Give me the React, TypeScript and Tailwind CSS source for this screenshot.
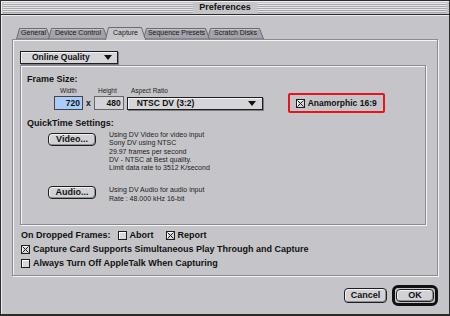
import React from "react";

const ui = "font-['Liberation_Sans',Arial,sans-serif]";

const tabs = [
  { label: "General", w: 35, z: "z-[1]" },
  { label: "Device Control", w: 60, z: "z-[2]" },
  { label: "Capture", w: 41, z: "z-[6]", active: true },
  { label: "Sequence Presets", w: 67, z: "z-[4]" },
  { label: "Scratch Disks", w: 57, z: "z-[3]" },
];

function Tab({ label, w, z, active }: { label: string; w: number; z: string; active?: boolean }) {
  const h = active ? 13 : 11;
  return (
    <div
      className={`relative ${z} flex items-center justify-center -ml-[3px] first:ml-0 text-[7px] text-[#1a1a1a] ${active ? "h-[13px] -mb-[1px]" : "h-[11px]"}`}
      style={{ width: w }}
    >
      <svg className="absolute inset-0" width={w} height={h}>
        <polygon
          points={`0.5,${h} 3.5,0.5 ${w - 4.5},0.5 ${w - 0.5},${h}`}
          fill={active ? "#c5c5c9" : "#a3a3ab"}
          stroke="#6b6b72"
          strokeWidth="1"
        />
        {active && <line x1="1" y1={h - 0.5} x2={w - 1} y2={h - 0.5} stroke="#c5c5c9" strokeWidth="2" />}
        {!active && <line x1="4" y1="1.5" x2={w - 5} y2="1.5" stroke="#c4c4ca" strokeWidth="1" />}
      </svg>
      <span className="relative pb-[1px]">{label}</span>
    </div>
  );
}

function Check({ on }: { on?: boolean }) {
  return (
    <span className="flex h-[9px] w-[9px] shrink-0 items-center justify-center border border-[#1e1e1e] bg-[#d8d8dc] shadow-[inset_1px_1px_0_#ffffff]">
      {on && (
        <svg width="7" height="7" viewBox="0 0 7 7">
          <path d="M0.5 0.5 L6.5 6.5 M6.5 0.5 L0.5 6.5" stroke="#1e1e1e" strokeWidth="1" />
        </svg>
      )}
    </span>
  );
}

function Arrow() {
  return (
    <svg width="8" height="5" viewBox="0 0 8 5">
      <path d="M0 0 H8 L4 5 Z" fill="#111" />
    </svg>
  );
}

function PushButton({ children, className = "" }: { children: React.ReactNode; className?: string }) {
  return (
    <div
      className={`flex items-center justify-center rounded-[4px] border border-[#1e1e1e] bg-[#d2d2d6] text-[9px] font-bold text-[#111] shadow-[inset_1px_1px_0_#f2f2f4,inset_-1px_-1px_0_#8e8e94] ${className}`}
    >
      {children}
    </div>
  );
}

export default function App() {
  return (
    <div className={`${ui} flex h-[316px] w-[450px] flex-col border border-[#2c2c2c] border-b-2 bg-[#c5c5c9] text-[#111]`}>
      {/* title bar */}
      <div className="flex h-[14px] shrink-0 items-center border-b border-[#2c2c2c] px-[2px] shadow-[inset_1px_1px_0_#eeeef0]">
        <div className="h-[10px] flex-1 bg-[repeating-linear-gradient(to_bottom,#e6e6ea_0px,#e6e6ea_1px,#a8a8ae_1px,#a8a8ae_2px)]" />
        <span className="px-[6px] text-[9px] font-bold leading-none">Preferences</span>
        <div className="h-[10px] flex-1 bg-[repeating-linear-gradient(to_bottom,#e6e6ea_0px,#e6e6ea_1px,#a8a8ae_1px,#a8a8ae_2px)]" />
      </div>

      <div className="flex flex-1 flex-col px-[11px] pt-[12px] shadow-[inset_1px_1px_0_#eeeef0]">
        {/* tabs */}
        <div className="flex h-[12px] items-end pl-[4px]">
          {tabs.map((t) => (
            <Tab key={t.label} {...t} />
          ))}
        </div>

        {/* tab panel */}
        <div className="flex h-[237px] flex-col border border-[#8a8a90] px-[7px] pt-[11px] shadow-[inset_1px_1px_0_#f4f4f6,1px_1px_0_#f4f4f6]">
          {/* popup */}
          <div className="flex h-[13px] w-[98px] items-center justify-between border border-[#1e1e1e] bg-[#d6d6da] pl-[11px] pr-[5px] text-[8.5px] font-bold shadow-[1px_1px_0_#7e7e84,inset_1px_1px_0_#f4f4f6]">
            <span>Online Quality</span>
            <Arrow />
          </div>

          {/* group box */}
          <div className="mt-[1px] flex h-[160px] w-[406px] flex-col border border-[#8a8a90] px-[6px] pt-[8px] shadow-[inset_1px_1px_0_#f4f4f6,1px_1px_0_#f4f4f6]">
            <div className="text-[9px] font-bold leading-[10px]">Frame Size:</div>

            <div className="mt-[3px] flex text-[6.5px] leading-[8px] text-[#222]">
              <span className="ml-[33px] w-[38px]">Width</span>
              <span className="w-[33px]">Height</span>
              <span>Aspect Ratio</span>
            </div>

            <div className="mt-[1px] flex h-[14px] items-center">
              <div className="ml-[27px] flex h-[14px] w-[29px] items-center justify-end border border-[#444] bg-[#a8cdfa] pr-[2px] text-[8.5px] font-bold">
                720
              </div>
              <span className="mx-[3px] text-[8.5px] font-bold">x</span>
              <div className="flex h-[14px] w-[30px] items-center justify-end border border-[#666] bg-[#d4d4d8] pr-[2px] text-[8.5px] font-bold">
                480
              </div>
              <div className="ml-[3px] flex h-[13px] w-[136px] items-center justify-between border border-[#1e1e1e] bg-[#d6d6da] pl-[9px] pr-[6px] text-[8.5px] font-bold shadow-[1px_1px_0_#7e7e84,inset_1px_1px_0_#f4f4f6]">
                <span>NTSC DV (3:2)</span>
                <Arrow />
              </div>
              <div className="-my-[3px] ml-[25px] flex h-[20px] w-[97px] items-center gap-[3px] rounded-[2px] border-2 border-[#e8141c] pl-[6px]">
                <Check on />
                <span className="text-[8.5px] font-bold">Anamorphic 16:9</span>
              </div>
            </div>

            <div className="mt-[8px] text-[9px] font-bold leading-[10px]">QuickTime Settings:</div>

            <div className="mt-[3px] flex">
              <PushButton className="ml-[21px] mt-[2px] h-[13px] w-[48px]">Video...</PushButton>
              <div className="ml-[13px] text-[7px] leading-[8.3px] text-[#222]">
                <div>Using DV Video for video input</div>
                <div>Sony DV using NTSC</div>
                <div>29.97 frames per second</div>
                <div>DV - NTSC at Best quality.</div>
                <div>Limit data rate to 3512 K/second</div>
              </div>
            </div>

            <div className="mt-[14px] flex">
              <PushButton className="ml-[21px] h-[13px] w-[48px]">Audio...</PushButton>
              <div className="ml-[13px] text-[7px] leading-[8.3px] text-[#222]">
                <div>Using DV Audio for audio input</div>
                <div>Rate : 48.000 kHz 16-bit</div>
              </div>
            </div>
          </div>

          {/* options */}
          <div className="mt-[5px] flex flex-col gap-[4px] pl-[1px] text-[9px] font-bold leading-[10px]">
            <div className="flex items-center">
              <span>On Dropped Frames:</span>
              <span className="ml-[7px]"><Check /></span>
              <span className="ml-[3px]">Abort</span>
              <span className="ml-[12px]"><Check on /></span>
              <span className="ml-[3px]">Report</span>
            </div>
            <div className="flex items-center gap-[3px]">
              <Check on />
              <span>Capture Card Supports Simultaneous Play Through and Capture</span>
            </div>
            <div className="flex items-center gap-[3px]">
              <Check />
              <span>Always Turn Off AppleTalk When Capturing</span>
            </div>
          </div>
        </div>

        {/* buttons */}
        <div className="mt-[9px] flex items-center justify-end gap-[5px]">
          <PushButton className="h-[15px] w-[43px]">Cancel</PushButton>
          <div className="rounded-[6px] border-[3px] border-[#111] p-[1px]">
            <PushButton className="h-[13px] w-[38px]">OK</PushButton>
          </div>
        </div>
      </div>
    </div>
  );
}
